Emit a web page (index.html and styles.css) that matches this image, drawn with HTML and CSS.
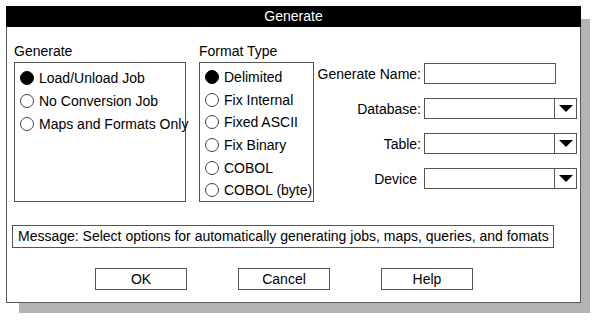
FILE: index.html
```html
<!DOCTYPE html>
<html>
<head>
<meta charset="utf-8">
<link rel="stylesheet" href="styles.css">
</head>
<body>
<div class="stack">
<div class="shadow"></div>
<div class="dialog">
  <div class="titlebar">Generate</div>
  <div class="content">
    <div class="top">
      <div class="group gen">
        <div class="glabel">Generate</div>
        <div class="box">
          <div class="radio"><span class="dot on"></span>Load/Unload Job</div>
          <div class="radio"><span class="dot"></span>No Conversion Job</div>
          <div class="radio"><span class="dot"></span>Maps and Formats Only</div>
        </div>
      </div>
      <div class="group fmt">
        <div class="glabel">Format Type</div>
        <div class="box">
          <div class="radio"><span class="dot on"></span>Delimited</div>
          <div class="radio"><span class="dot"></span>Fix Internal</div>
          <div class="radio"><span class="dot"></span>Fixed ASCII</div>
          <div class="radio"><span class="dot"></span>Fix Binary</div>
          <div class="radio"><span class="dot"></span>COBOL</div>
          <div class="radio"><span class="dot"></span>COBOL (byte)</div>
        </div>
      </div>
      <div class="fields">
        <div class="row"><span class="lbl">Generate Name:</span><span class="input"></span></div>
        <div class="row"><span class="lbl">Database:</span><span class="combo"><span class="cval"></span><span class="cbtn"><span class="tri"></span></span></span></div>
        <div class="row"><span class="lbl">Table:</span><span class="combo"><span class="cval"></span><span class="cbtn"><span class="tri"></span></span></span></div>
        <div class="row"><span class="lbl dev">Device</span><span class="combo"><span class="cval"></span><span class="cbtn"><span class="tri"></span></span></span></div>
      </div>
    </div>
    <div class="message">Message: Select options for automatically generating jobs, maps, queries, and fomats</div>
    <div class="buttons">
      <span class="btn">OK</span>
      <span class="btn">Cancel</span>
      <span class="btn">Help</span>
    </div>
  </div>
</div>
</div>
</body>
</html>
```
FILE: styles.css
```css
body {
  margin: 0;
  background: #fff;
  font-family: "Liberation Sans", Arial, sans-serif;
  font-size: 14px;
  color: #000;
}
.stack {
  display: grid;
  margin: 6px 0 0 6px;
  width: 584px;
}
.shadow {
  grid-area: 1 / 1;
  margin: 13px 0 0 13px;
  width: 571px;
  height: 294px;
  background: #b3b3b3;
}
.dialog {
  grid-area: 1 / 1;
  z-index: 1;
  width: 575px;
  height: 297px;
  box-sizing: border-box;
  border: 1px solid #5a5a5a;
  border-top: none;
  background: #fff;
}
.titlebar {
  height: 21px;
  margin: 0 -1px;
  background: #000;
  color: #fff;
  text-align: center;
  line-height: 21px;
}
.content {
  padding: 16px 0 0 7px;
}
.top {
  display: flex;
}
.glabel {
  height: 17px;
  line-height: 17px;
  margin-bottom: 2px;
}
.box {
  border: 1px solid #555;
  height: 140px;
  box-sizing: border-box;
  padding-top: 3px;
}
.gen { width: 172px; }
.fmt { width: 115px; margin-left: 13px; }
.radio {
  display: flex;
  align-items: center;
  height: 22.6px;
  white-space: nowrap;
  padding-left: 5px;
}
.gen .radio { height: 23.4px; }
.dot {
  width: 14px;
  height: 14px;
  box-sizing: border-box;
  border: 1px solid #444;
  border-radius: 50%;
  margin-right: 5px;
  flex: none;
}
.dot.on {
  background: #000;
  border-color: #000;
}
.fields {
  margin-top: 19px;
  margin-left: 1px;
}
.row {
  display: flex;
  align-items: center;
  height: 21px;
  margin-bottom: 14px;
}
.row:first-child { margin-top: 1px; }
.lbl {
  width: 106px;
  text-align: right;
  margin-right: 3px;
  white-space: nowrap;
}
.lbl.dev { padding-right: 4px; box-sizing: border-box; }
.input {
  width: 132px;
  height: 21px;
  box-sizing: border-box;
  border: 1px solid #555;
}
.combo {
  display: flex;
  width: 153px;
  height: 21px;
  box-sizing: border-box;
  border: 1px solid #555;
}
.cval { flex: 1; }
.cbtn {
  width: 21px;
  border-left: 1px solid #555;
  display: flex;
  align-items: center;
  justify-content: center;
}
.tri {
  width: 0;
  height: 0;
  border-left: 7px solid transparent;
  border-right: 7px solid transparent;
  border-top: 7px solid #000;
}
.message {
  margin-top: 22px;
  margin-left: -2px;
  width: 542px;
  height: 23px;
  box-sizing: border-box;
  border: 1px solid #555;
  line-height: 21px;
  padding-left: 5px;
  white-space: nowrap;
}
.buttons {
  display: flex;
  margin-top: 20px;
  padding-left: 81px;
  gap: 51px;
}
.btn {
  width: 92px;
  height: 22px;
  box-sizing: border-box;
  border: 1px solid #555;
  text-align: center;
  line-height: 20px;
}
```
